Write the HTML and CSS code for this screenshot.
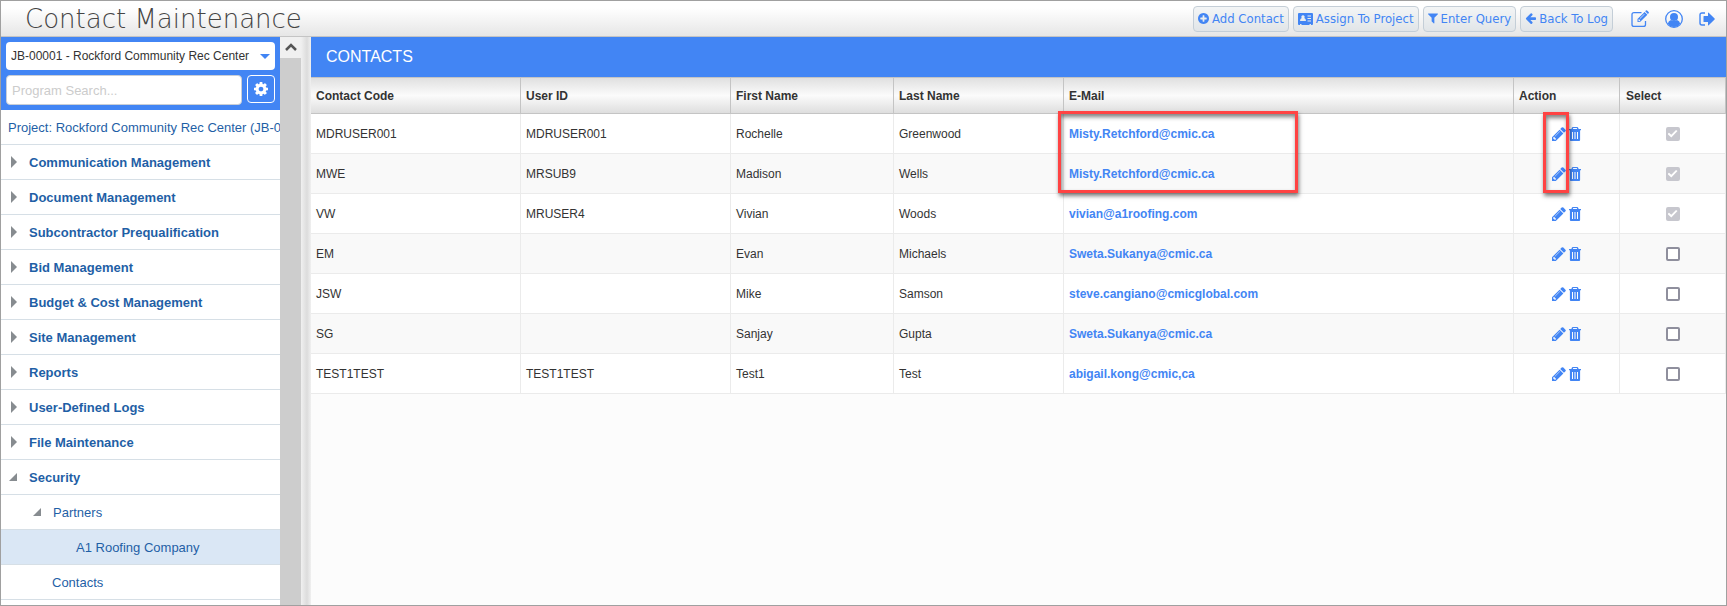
FILE: index.html
```html
<!DOCTYPE html>
<html lang="en">
<head>
<meta charset="utf-8">
<title>Contact Maintenance</title>
<link rel="stylesheet" href="styles.css">
</head>
<body>
<svg class="sprite" aria-hidden="true">
  <symbol id="pencil" viewBox="128 128 1536 1536"><path d="M491 1536l91-91-235-235-91 91v107h128v128h107zm523-928q0-22-22-22-10 0-17 7l-542 542q-7 7-7 17 0 22 22 22 10 0 17-7l542-542q7-7 7-17zm-54-192l416 416-832 832h-416v-416l832-832zm683 96q0 53-37 90l-166 166-416-416 166-165q36-38 90-38 53 0 91 38l235 234q37 39 37 91z"/></symbol>
  <symbol id="trash" viewBox="0 0 12 14"><path fill-rule="evenodd" d="M4 0h4q1 0 1.300 1l.3 1H12v1.200h-.9V13q0 1-1 1H1.900q-1 0-1-1V3.200H0V2h2.400l.3-1Q3 0 4 0zM4.200 1 3.900 2h4.200L7.800 1zM3 5v7h1V5zM5.500 5v7h1V5zM8 5v7h1V5z"/></symbol>
</svg>
<div class="app">
  <header class="topbar">
    <h1 class="title">Contact Maintenance</h1>
    <div class="toolbar">
      <button class="btn" type="button"><svg class="ic" viewBox="128 128 1536 1536"><path d="M1344 960v-128q0-26-19-45t-45-19h-256v-256q0-26-19-45t-45-19h-128q-26 0-45 19t-19 45v256h-256q-26 0-45 19t-19 45v128q0 26 19 45t45 19h256v256q0 26 19 45t45 19h128q26 0 45-19t19-45v-256h256q26 0 45-19t19-45zm320-64q0 209-103 385.500t-279.500 279.500-385.500 103-385.500-103-279.500-279.500-103-385.500 103-385.500 279.500-279.500 385.500-103 385.500 103 279.500 279.500 103 385.500z"/></svg>Add Contact</button>
      <button class="btn" type="button"><svg class="ic ic-card" viewBox="0 0 15 12"><path fill-rule="evenodd" d="M1 0h13q1 0 1 1v10q0 1-1 1h-1v-1h-1.500v1h-8v-1H2v1H1q-1 0-1-1V1q0-1 1-1zM5 2.200a1.700 1.700 0 0 0-1.200 2.900Q2 5.500 2 8h6Q8 5.500 6.200 5.100A1.700 1.700 0 0 0 5 2.200zM9.500 2.500v1H13v-1zM9.500 5v1H13V5zM9.500 7.500v1H13v-1z"/></svg>Assign To Project</button>
      <button class="btn" type="button"><svg class="ic ic-filter" viewBox="190 256 1412 1408"><path d="M1595 295q17 41-14 70l-493 493v742q0 42-39 59-13 5-25 5-27 0-45-19l-256-256q-19-19-19-45v-486l-493-493q-31-29-14-70 17-39 59-39h1280q42 0 59 39z"/></svg>Enter Query</button>
      <button class="btn" type="button"><svg class="ic" viewBox="64 200 1600 1500"><path d="M1664 896v128q0 53-32.500 90.500t-84.500 37.500h-704l293 294q38 36 38 90t-38 90l-75 76q-37 37-90 37-52 0-91-37l-651-652q-37-37-37-90 0-52 37-91l651-650q38-38 91-38 52 0 90 38l75 74q38 38 38 91t-38 91l-293 293h704q52 0 84.500 37.500t32.500 90.500z"/></svg>Back To Log</button>
    </div>
    <nav class="quick" aria-label="Account">
      <button class="icon-btn" type="button" aria-label="Notes"><svg width="18" height="18" viewBox="0 0 18 18"><path fill="none" stroke="currentColor" stroke-width="1.300" d="M10.500 2.600H3Q1 2.600 1 4.600v9.800q0 2 2 2h9.500q2 0 2-2V11"/><path fill-rule="evenodd" d="M6.500 9 13.600 1.900l2.800 2.800L9.300 11.800 6.500 12zM7.500 9.600v1.300h1.300l.5-.5-1.300-1.300zM13.200 3.900l-4.400 4.400.4.400 4.400-4.400zM14.200 1.300l.7-.7q.6-.6 1.200 0l1.500 1.500q.6.600 0 1.200l-.7.7z"/></svg></button>
      <button class="icon-btn" type="button" aria-label="User"><svg width="18" height="18" viewBox="0 0 18 18"><circle cx="9" cy="9" r="8.300" fill="none" stroke="currentColor" stroke-width="1.300"/><circle cx="9" cy="7" r="4"/><path d="M2.800 13.500Q3.500 10.500 6 10q3 2 6 0 2.500.500 3.200 3.500Q13 17 9 17t-6.200-3.500z"/></svg></button>
      <button class="icon-btn" type="button" aria-label="Sign out"><svg width="16" height="14" viewBox="0 0 16 14"><path fill="none" stroke="currentColor" stroke-width="1.400" d="M6 1H3Q1 1 1 3v8q0 2 2 2h3"/><path d="M4.500 4.500q0-.5.500-.5h4V1q0-.8.700-.3l5.900 5.800q.4.500 0 1L9.700 13.300Q9 13.800 9 13v-3H5q-.5 0-.5-.5z"/></svg></button>
    </nav>
  </header>
  <div class="body">
    <aside class="sidebar">
      <div class="search">
        <div class="picker">
          <select class="project" aria-label="Project"><option>JB-00001 - Rockford Community Rec Center</option></select>
          <svg class="caret" width="10" height="5" viewBox="0 0 10 5"><path d="M0 0h10L5 5z"/></svg>
        </div>
        <input class="query" type="text" placeholder="Program Search..." aria-label="Program search">
        <button class="gear" type="button" aria-label="Settings"><svg width="14" height="14" viewBox="128 128 1536 1536"><path d="M1152 896q0-106-75-181t-181-75-181 75-75 181 75 181 181 75 181-75 75-181zm512-109v222q0 12-8 23t-20 13l-185 28q-19 54-39 91 35 50 107 138 10 12 10 25t-9 23q-27 37-99 108t-94 71q-12 0-26-9l-138-108q-44 23-91 38-16 136-29 186-7 28-36 28h-222q-14 0-24.500-8.500t-11.500-21.500l-28-184q-49-16-90-37l-141 107q-10 9-25 9-14 0-25-11-126-114-165-168-7-10-7-23 0-12 8-23 15-21 51-66.500t54-70.500q-27-50-41-99l-183-27q-13-2-21-12.500t-8-23.500v-222q0-12 8-23t19-13l186-28q14-46 39-92-40-57-107-138-10-12-10-24 0-10 9-23 26-36 98.500-107.500t94.500-71.500q13 0 26 10l138 107q44-23 91-38 16-136 29-186 7-28 36-28h222q14 0 24.500 8.500t11.500 21.500l28 184q49 16 90 37l142-107q9-9 24-9 13 0 25 10 129 119 165 170 7 8 7 22 0 12-8 23-15 21-51 66.500t-54 70.500q26 50 41 98l183 28q13 2 21 12.500t8 23.500z"/></svg></button>
      </div>
      <nav class="tree" aria-label="Programs">
        <a class="node current-project" href="#">Project: Rockford Community Rec Center (JB-00001)</a>
        <a class="node group" href="#">Communication Management</a>
        <a class="node group" href="#">Document Management</a>
        <a class="node group" href="#">Subcontractor Prequalification</a>
        <a class="node group" href="#">Bid Management</a>
        <a class="node group" href="#">Budget &amp; Cost Management</a>
        <a class="node group" href="#">Site Management</a>
        <a class="node group" href="#">Reports</a>
        <a class="node group" href="#">User-Defined Logs</a>
        <a class="node group" href="#">File Maintenance</a>
        <a class="node group open" href="#">Security</a>
        <a class="node sub open" href="#">Partners</a>
        <a class="node leaf selected" href="#">A1 Roofing Company</a>
        <a class="node item" href="#">Contacts</a>
      </nav>
    </aside>
    <div class="scrollbar"><svg class="scroll-up" width="12" height="8" viewBox="0 0 12 8"><path fill="none" stroke="currentColor" stroke-width="2.500" d="M1 7 6 2l5 5"/></svg><div class="thumb"></div></div>
    <div class="splitter"></div>
    <main class="main">
      <h2 class="heading">CONTACTS</h2>
      <table class="grid">
        <colgroup><col class="c-code"><col class="c-user"><col class="c-first"><col class="c-last"><col><col class="c-act"><col class="c-sel"></colgroup>
        <thead><tr><th>Contact Code</th><th>User ID</th><th>First Name</th><th>Last Name</th><th>E-Mail</th><th>Action</th><th>Select</th></tr></thead>
        <tbody>
          <tr><td>MDRUSER001</td><td>MDRUSER001</td><td>Rochelle</td><td>Greenwood</td><td class="anchor"><a href="#">Misty.Retchford@cmic.ca</a><span class="mark mark-mail"></span></td><td class="anchor act"><button type="button" aria-label="Edit"><svg class="pen"><use href="#pencil"/></svg></button><button type="button" aria-label="Delete"><svg class="bin"><use href="#trash"/></svg></button><span class="mark mark-edit"></span></td><td class="sel"><input type="checkbox" aria-label="Select Rochelle" checked disabled></td></tr>
          <tr><td>MWE</td><td>MRSUB9</td><td>Madison</td><td>Wells</td><td><a href="#">Misty.Retchford@cmic.ca</a></td><td class="act"><button type="button" aria-label="Edit"><svg class="pen"><use href="#pencil"/></svg></button><button type="button" aria-label="Delete"><svg class="bin"><use href="#trash"/></svg></button></td><td class="sel"><input type="checkbox" aria-label="Select Madison" checked disabled></td></tr>
          <tr><td>VW</td><td>MRUSER4</td><td>Vivian</td><td>Woods</td><td><a href="#">vivian@a1roofing.com</a></td><td class="act"><button type="button" aria-label="Edit"><svg class="pen"><use href="#pencil"/></svg></button><button type="button" aria-label="Delete"><svg class="bin"><use href="#trash"/></svg></button></td><td class="sel"><input type="checkbox" aria-label="Select Vivian" checked disabled></td></tr>
          <tr><td>EM</td><td></td><td>Evan</td><td>Michaels</td><td><a href="#">Sweta.Sukanya@cmic.ca</a></td><td class="act"><button type="button" aria-label="Edit"><svg class="pen"><use href="#pencil"/></svg></button><button type="button" aria-label="Delete"><svg class="bin"><use href="#trash"/></svg></button></td><td class="sel"><input type="checkbox" aria-label="Select Evan"></td></tr>
          <tr><td>JSW</td><td></td><td>Mike</td><td>Samson</td><td><a href="#">steve.cangiano@cmicglobal.com</a></td><td class="act"><button type="button" aria-label="Edit"><svg class="pen"><use href="#pencil"/></svg></button><button type="button" aria-label="Delete"><svg class="bin"><use href="#trash"/></svg></button></td><td class="sel"><input type="checkbox" aria-label="Select Mike"></td></tr>
          <tr><td>SG</td><td></td><td>Sanjay</td><td>Gupta</td><td><a href="#">Sweta.Sukanya@cmic.ca</a></td><td class="act"><button type="button" aria-label="Edit"><svg class="pen"><use href="#pencil"/></svg></button><button type="button" aria-label="Delete"><svg class="bin"><use href="#trash"/></svg></button></td><td class="sel"><input type="checkbox" aria-label="Select Sanjay"></td></tr>
          <tr><td>TEST1TEST</td><td>TEST1TEST</td><td>Test1</td><td>Test</td><td><a href="#">abigail.kong@cmic,ca</a></td><td class="act"><button type="button" aria-label="Edit"><svg class="pen"><use href="#pencil"/></svg></button><button type="button" aria-label="Delete"><svg class="bin"><use href="#trash"/></svg></button></td><td class="sel"><input type="checkbox" aria-label="Select Test1"></td></tr>
        </tbody>
      </table>
    </main>
  </div>
</div>
</body>
</html>
```
FILE: styles.css
```css
* { box-sizing: border-box; }
body { margin: 0; font-family: "Liberation Sans", Arial, sans-serif; font-size: 12px; color: #333; }
button { margin: 0; padding: 0; border: 0; background: none; font: inherit; color: inherit; }
svg { display: block; flex: none; fill: currentColor; }
a { color: #4285f4; text-decoration: none; }
.sprite { position: absolute; width: 0; height: 0; }

.app { display: flex; flex-direction: column; height: 100vh; border: 1px solid #a0a0a0; overflow: hidden; }
.topbar { display: flex; align-items: center; flex: none; height: 36px; padding: 0 11px 0 24px; border-bottom: 1px solid #c4c4c4; background: linear-gradient(#fff 20%, #e6e6e6); }
.title { flex: 1; margin: 0; font: 200 26px/34px "DejaVu Sans", sans-serif; color: #444; }
.toolbar { display: flex; gap: 4px; }
.btn { display: flex; align-items: center; gap: 3px; height: 26px; padding: 0 4px; border: 1px solid #c4ced7; border-radius: 4px; background: linear-gradient(#f3f5f6, #e1e5e8); color: #4285f4; font: 13px/24px "DejaVu Sans Condensed", "DejaVu Sans", sans-serif; font-stretch: condensed; white-space: nowrap; }
.ic { width: 11px; height: 11px; }
.ic-card { width: 15px; height: 12px; }
.ic-filter { width: 10px; height: 11px; }
.quick { display: flex; align-items: center; gap: 16px; margin-left: 18px; color: #4285f4; }

.body { display: flex; flex: 1; min-height: 0; }
.sidebar { flex: none; width: 279px; overflow: hidden; background: #fff; }
.search { display: grid; grid-template-columns: 1fr 28px; gap: 5px; padding: 5px; background: #4285f4; }
.picker { grid-column: 1 / 3; position: relative; }
.project { display: block; appearance: none; width: 100%; height: 28px; padding: 0 22px 0 5px; border: 0; border-radius: 4px; background: #fff; color: #333; font: 12px "Liberation Sans", Arial, sans-serif; }
.caret { position: absolute; right: 5px; top: 12px; color: #4285f4; }
.query { min-width: 0; height: 30px; padding: 0 5px; border: 1px solid #c9ced6; border-radius: 4px; background: #fff; font: 13px "Liberation Sans", Arial, sans-serif; }
.query::placeholder { color: #ccc; opacity: 1; }
.gear { display: grid; place-items: center; height: 28px; border: 1px solid #fff; border-radius: 4px; color: #fff; }

.node { display: flex; align-items: center; height: 35px; border-bottom: 1px solid #d6dfe6; font-size: 13px; color: #1f5fa6; white-space: nowrap; }
.node::before { content: ""; flex: none; width: 6px; height: 12px; background: #878c90; clip-path: polygon(0 0, 100% 50%, 0 100%); }
.current-project { padding-left: 7px; }
.current-project::before, .leaf::before, .item::before { display: none; }
.group { padding-left: 10px; gap: 12px; font-weight: bold; }
.open::before { width: 8px; height: 8px; clip-path: polygon(100% 0, 100% 100%, 0 100%); }
.group.open { padding-left: 8px; }
.sub { padding-left: 32px; gap: 12px; }
.leaf { padding-left: 75px; }
.item { padding-left: 51px; }
.selected { background: #dae7f5; }

.scrollbar { display: flex; flex-direction: column; flex: none; width: 21px; background: #f0f0f0; color: #555; }
.scroll-up { margin: 6px 5px 7px; }
.thumb { flex: 1; background: #cdcdcd; }
.splitter { flex: none; width: 10px; background: linear-gradient(90deg, #f0f0f0, #dcdcdc 60%, #f0f0f0); }

.main { flex: 1; min-width: 0; background: #fcfcfc; }
.heading { margin: 0; padding-left: 15px; background: #4285f4; color: #fff; font-size: 16px; font-weight: normal; line-height: 40px; }
.grid { width: 100%; table-layout: fixed; border-collapse: separate; border-spacing: 0; }
.c-code, .c-user { width: 210px; }
.c-first { width: 163px; }
.c-last { width: 170px; }
.c-act, .c-sel { width: 106px; }
.grid th { height: 37px; padding: 0 5px; border: 1px solid #c4c4c4; border-left: 0; background: linear-gradient(#e0e0e0, #fbfbfb 50%, #dedede); text-align: left; }
.grid td { height: 40px; padding: 0 5px; border: solid #ebebeb; border-width: 0 1px 1px 0; background: #fff; }
.grid tr:nth-child(even) td { background: #f9f9f9; }
.grid th:last-child { padding-left: 6px; }
.grid a { font-weight: bold; }
.act, .sel { text-align: center; }
.act button { display: inline-block; vertical-align: middle; color: #4285f4; }
.act button + button { margin-left: 3px; }
.pen { width: 14px; height: 14px; }
.bin { width: 12px; height: 14px; }
.sel input { appearance: none; display: inline-grid; place-items: center; width: 14px; height: 14px; margin: 0; border: 2px solid #8f8f9d; border-radius: 2px; background: #fff; vertical-align: middle; }
.sel input:checked { border-color: #c7c7ce; background: #c7c7ce; }
.sel input:checked::before { content: ""; width: 10px; height: 8px; background: #fff; clip-path: polygon(0 50%, 15% 35%, 38% 60%, 85% 0, 100% 15%, 38% 95%); }

.anchor { position: relative; }
.mark { position: absolute; z-index: 1; border: 3px solid #ff4343; pointer-events: none; box-shadow: 1px 3px 4px rgba(0, 0, 0, .5), inset 1px 3px 4px rgba(0, 0, 0, .5); }
.mark-mail { left: -6px; top: -3px; width: 240px; height: 82px; }
.mark-edit { left: 29px; top: -2px; width: 26px; height: 81px; }
```
